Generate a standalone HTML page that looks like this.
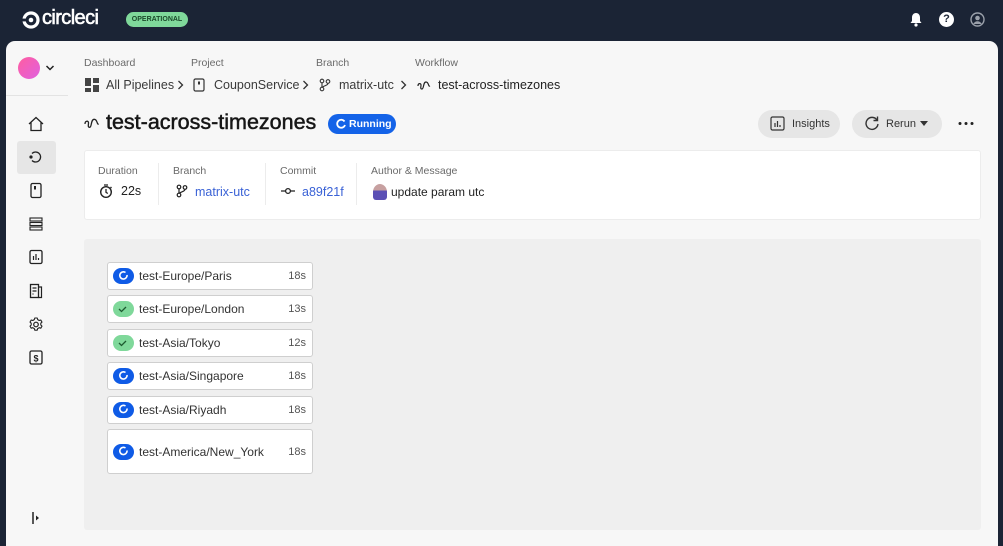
<!DOCTYPE html>
<html><head><style>
*{margin:0;padding:0;box-sizing:border-box}
html,body{width:1003px;height:546px;overflow:hidden}
body{background:#1b2435;font-family:"Liberation Sans",sans-serif;position:relative;color:#161616}
.a{position:absolute}
.lbl{font-size:10.5px;color:#6a6a6a}
.bc{font-size:12.5px;color:#3a3a3a}
.job{position:absolute;left:107px;width:206px;height:28px;background:#fff;border:1px solid #cfcfcf;border-radius:3px}
.job .ic{position:absolute;left:5px;top:50%;margin-top:-8px;width:21px;height:16px;border-radius:8px;background:#0f5be6}
.job .ic.ok{background:#7fd89a}
.job .n{position:absolute;left:31px;top:50%;margin-top:-8px;font-size:12px;line-height:16px;color:#333}
.job .t{position:absolute;right:6px;top:50%;margin-top:-8px;font-size:11px;line-height:16px;color:#555}
.side svg{position:absolute;left:27px}
</style></head><body>
<!-- top bar -->
<svg class="a" style="left:22px;top:11px" width="18" height="18" viewBox="0 0 18 18"><circle cx="9" cy="9" r="7" fill="none" stroke="#fff" stroke-width="3.2"/><circle cx="9" cy="9" r="2.3" fill="#fff"/><rect x="0" y="7.6" width="5" height="2.8" fill="#1b2435"/></svg>
<div class="a" style="left:42px;top:7px;font-size:20px;color:#fff;letter-spacing:-0.6px;-webkit-text-stroke:0.6px #fff">circleci</div>
<div class="a" style="left:126px;top:12px;width:62px;height:15px;border-radius:8px;background:#7fd89a;color:#1b4a2a;font-size:7px;font-weight:bold;text-align:center;line-height:15px">OPERATIONAL</div>
<svg class="a" style="left:909px;top:12px" width="14" height="15" viewBox="0 0 14 15"><path d="M7 1C4.5 1 3 3 3 5.5V9L1.5 11h11L11 9V5.5C11 3 9.5 1 7 1z" fill="#fff"/><circle cx="7" cy="13" r="1.6" fill="#fff"/></svg>
<div class="a" style="left:939px;top:12px;width:15px;height:15px;border-radius:50%;background:#fff;color:#1b2435;font-size:11px;font-weight:bold;text-align:center;line-height:15px">?</div>
<svg class="a" style="left:970px;top:12px" width="15" height="15" viewBox="0 0 15 15"><circle cx="7.5" cy="7.5" r="6.5" fill="none" stroke="#9aa0aa" stroke-width="1.4"/><circle cx="7.5" cy="6" r="2.3" fill="#9aa0aa"/><path d="M3.3 12c1-2 2.5-2.8 4.2-2.8s3.2.8 4.2 2.8" fill="#9aa0aa"/></svg>
<!-- main panel -->
<div class="a" style="left:6px;top:41px;width:992px;height:505px;background:#f7f7f7;border-radius:9px 9px 0 0"></div>
<div class="a" style="left:6px;top:95px;width:62px;height:1px;background:#e3e3e3"></div>
<div class="a" style="left:18px;top:57px;width:22px;height:22px;border-radius:50%;background:linear-gradient(135deg,#ff5ea0,#e060e0)"></div>
<svg class="a" style="left:45px;top:64px" width="10" height="8" viewBox="0 0 10 8"><path d="M1.5 2l3.5 3.5L8.5 2" fill="none" stroke="#222" stroke-width="1.5"/></svg>
<!-- sidebar -->
<div class="a" style="left:17px;top:141px;width:39px;height:33px;background:#e6e6e6;border-radius:3px"></div>
<div class="side">
<svg style="top:116px" width="18" height="16" viewBox="0 0 18 16"><path d="M2 8L9 1.5 16 8M4 6.5V14.5h10V6.5" fill="none" stroke="#222" stroke-width="1.3"/></svg>
<svg style="top:149px" width="18" height="16" viewBox="0 0 18 16"><path d="M5 4.5A5 5 0 1 1 5 11.5" fill="none" stroke="#222" stroke-width="1.3"/><circle cx="4" cy="8" r="1.6" fill="#222"/></svg>
<svg style="top:182px" width="18" height="17" viewBox="0 0 18 17"><rect x="4" y="1.5" width="10" height="14" rx="1.5" fill="none" stroke="#222" stroke-width="1.3"/><rect x="7" y="4" width="2" height="3.5" fill="#222"/></svg>
<svg style="top:216px" width="18" height="16" viewBox="0 0 18 16"><rect x="3" y="2" width="12" height="3" fill="none" stroke="#222" stroke-width="1.1"/><rect x="3" y="6.5" width="12" height="3" fill="none" stroke="#222" stroke-width="1.1"/><rect x="3" y="11" width="12" height="3" fill="none" stroke="#222" stroke-width="1.1"/></svg>
<svg style="top:249px" width="18" height="16" viewBox="0 0 18 16"><rect x="3" y="1.5" width="12" height="13" rx="1.5" fill="none" stroke="#222" stroke-width="1.3"/><path d="M6.5 11V7M9 11V5M11.5 11V9" stroke="#222" stroke-width="1.2"/></svg>
<svg style="top:283px" width="18" height="16" viewBox="0 0 18 16"><rect x="3.5" y="1.5" width="8" height="13" fill="none" stroke="#222" stroke-width="1.3"/><path d="M11.5 4H14.5V14.5H11.5M5.5 5h4M5.5 8h4M5.5 11h1" stroke="#222" stroke-width="1.2" fill="none"/></svg>
<svg style="top:316px" width="18" height="17" viewBox="-9 -8.5 18 17"><circle r="2.3" fill="none" stroke="#222" stroke-width="1.2"/><path d="M-1.2 -6.5h2.4l.5 1.6 1.5.9 1.6-.5 1.2 2.1-1.2 1.1v1.8l1.2 1.1-1.2 2.1-1.6-.5-1.5.9-.5 1.6h-2.4l-.5-1.6-1.5-.9-1.6.5-1.2-2.1 1.2-1.1v-1.8l-1.2-1.1 1.2-2.1 1.6.5 1.5-.9z" fill="none" stroke="#222" stroke-width="1.1" stroke-linejoin="round"/></svg>
<svg style="top:349px" width="18" height="17" viewBox="0 0 18 17"><rect x="3" y="2" width="12" height="13" rx="1.5" fill="none" stroke="#222" stroke-width="1.3"/><text x="9" y="12.5" font-size="9" text-anchor="middle" font-family="Liberation Sans" font-weight="bold" fill="#222">$</text></svg>
<svg style="top:510px" width="18" height="16" viewBox="0 0 18 16"><path d="M6 2v12" stroke="#222" stroke-width="1.5"/><path d="M9 5.5l3 2.5-3 2.5z" fill="#222"/></svg>
</div>
<!-- breadcrumbs -->
<div class="a lbl" style="left:84px;top:57px">Dashboard</div>
<div class="a lbl" style="left:191px;top:57px">Project</div>
<div class="a lbl" style="left:316px;top:57px">Branch</div>
<div class="a lbl" style="left:415px;top:57px">Workflow</div>
<svg class="a" style="left:85px;top:78px" width="14" height="14" viewBox="0 0 14 14" fill="#444"><rect x="0" y="0" width="6" height="8"/><rect x="8" y="0" width="6" height="5"/><rect x="0" y="10" width="6" height="4"/><rect x="8" y="7" width="6" height="7"/></svg>
<div class="a bc" style="left:106px;top:78px">All Pipelines</div>
<svg class="a" style="left:177px;top:80px" width="7" height="10" viewBox="0 0 7 10"><path d="M1.5 1l4 4-4 4" fill="none" stroke="#333" stroke-width="1.3"/></svg>
<svg class="a" style="left:193px;top:78px" width="12" height="14" viewBox="0 0 12 14"><rect x="1" y="1" width="10" height="12" rx="1.5" fill="none" stroke="#333" stroke-width="1.2"/><rect x="5" y="3.5" width="2" height="3" fill="#333"/></svg>
<div class="a bc" style="left:214px;top:78px">CouponService</div>
<svg class="a" style="left:302px;top:80px" width="7" height="10" viewBox="0 0 7 10"><path d="M1.5 1l4 4-4 4" fill="none" stroke="#333" stroke-width="1.3"/></svg>
<svg class="a" style="left:319px;top:78px" width="12" height="14" viewBox="0 0 12 14"><circle cx="3" cy="3" r="1.8" fill="none" stroke="#333" stroke-width="1.1"/><circle cx="3" cy="11" r="1.8" fill="none" stroke="#333" stroke-width="1.1"/><circle cx="9" cy="3.5" r="1.8" fill="none" stroke="#333" stroke-width="1.1"/><path d="M3 5v4M9 5.3c0 2.5-4 2-5.5 4" fill="none" stroke="#333" stroke-width="1.1"/></svg>
<div class="a bc" style="left:339px;top:78px">matrix-utc</div>
<svg class="a" style="left:400px;top:80px" width="7" height="10" viewBox="0 0 7 10"><path d="M1.5 1l4 4-4 4" fill="none" stroke="#333" stroke-width="1.3"/></svg>
<svg class="a" style="left:417px;top:79px" width="14" height="12" viewBox="0 0 14 12"><path d="M1 7c0-3 3-3 3-1s-1 4 1 4 1-7 4-7 2 5 4 4" fill="none" stroke="#222" stroke-width="1.2"/></svg>
<div class="a bc" style="left:438px;top:78px;color:#222">test-across-timezones</div>
<!-- title -->
<svg class="a" style="left:84px;top:116px" width="16" height="14" viewBox="0 0 16 14"><path d="M1 8c0-3.5 3.5-3.5 3.5-1.2s-1 4.5 1.2 4.5 1-8 4.5-8 2.5 6 4.5 4.5" fill="none" stroke="#222" stroke-width="1.3"/></svg>
<div class="a" style="left:106px;top:110px;font-size:21.5px;color:#161616;-webkit-text-stroke:0.5px #161616;white-space:nowrap">test-across-timezones</div>
<div class="a" style="left:328px;top:114px;width:68px;height:20px;border-radius:10px;background:#1463e8;color:#fff;font-size:10.5px;font-weight:bold;line-height:20px;padding-left:21px">Running</div>
<svg class="a" style="left:335px;top:118px" width="12" height="12" viewBox="0 0 12 12"><path d="M9.5 3.5A4 4 0 1 0 10 7" fill="none" stroke="#fff" stroke-width="1.8"/></svg>
<!-- buttons -->
<div class="a" style="left:758px;top:110px;width:82px;height:28px;border-radius:14px;background:#e6e6e6;font-size:11px;color:#333;line-height:28px;padding-left:34px">Insights</div>
<svg class="a" style="left:770px;top:116px" width="15" height="15" viewBox="0 0 15 15"><rect x="1" y="1" width="13" height="13" rx="1.5" fill="none" stroke="#333" stroke-width="1.2"/><path d="M5 11V7M7.5 11V5M10 11V9" stroke="#333" stroke-width="1.2"/></svg>
<div class="a" style="left:852px;top:110px;width:90px;height:28px;border-radius:14px;background:#e6e6e6;font-size:11px;color:#333;line-height:28px;padding-left:34px">Rerun</div>
<svg class="a" style="left:864px;top:115px" width="16" height="16" viewBox="0 0 16 16"><path d="M13 5A6 6 0 1 0 14 9" fill="none" stroke="#333" stroke-width="1.4"/><path d="M13.5 1.5V5.5H9.5" fill="none" stroke="#333" stroke-width="1.4"/></svg>
<svg class="a" style="left:920px;top:121px" width="8" height="5" viewBox="0 0 8 5"><path d="M0 0h8L4 5z" fill="#333"/></svg>
<svg class="a" style="left:958px;top:121px" width="16" height="5" viewBox="0 0 16 5"><circle cx="2" cy="2.5" r="1.5" fill="#222"/><circle cx="8" cy="2.5" r="1.5" fill="#222"/><circle cx="14" cy="2.5" r="1.5" fill="#222"/></svg>
<!-- info card -->
<div class="a" style="left:84px;top:150px;width:897px;height:70px;background:#fff;border:1px solid #ececec;border-radius:3px"></div>
<div class="a" style="left:158px;top:163px;width:1px;height:42px;background:#ececec"></div>
<div class="a" style="left:265px;top:163px;width:1px;height:42px;background:#ececec"></div>
<div class="a" style="left:356px;top:163px;width:1px;height:42px;background:#ececec"></div>
<div class="a lbl" style="left:98px;top:165px">Duration</div>
<div class="a lbl" style="left:173px;top:165px">Branch</div>
<div class="a lbl" style="left:280px;top:165px">Commit</div>
<div class="a lbl" style="left:371px;top:165px">Author &amp; Message</div>
<svg class="a" style="left:99px;top:184px" width="14" height="14" viewBox="0 0 14 14"><circle cx="7" cy="8" r="5.3" fill="none" stroke="#222" stroke-width="1.4"/><path d="M7 5v3.3l1.8 1.2M5 1h4M11.5 3l1 1" stroke="#222" stroke-width="1.3" fill="none"/></svg>
<div class="a" style="left:121px;top:184px;font-size:12.5px;color:#222">22s</div>
<svg class="a" style="left:176px;top:184px" width="12" height="14" viewBox="0 0 12 14"><circle cx="3" cy="3" r="1.8" fill="none" stroke="#222" stroke-width="1.2"/><circle cx="3" cy="11" r="1.8" fill="none" stroke="#222" stroke-width="1.2"/><circle cx="9" cy="3.5" r="1.8" fill="none" stroke="#222" stroke-width="1.2"/><path d="M3 5v4M9 5.3c0 2.5-4 2-5.5 4" fill="none" stroke="#222" stroke-width="1.2"/></svg>
<div class="a" style="left:195px;top:185px;font-size:12.5px;color:#3a62d6">matrix-utc</div>
<svg class="a" style="left:281px;top:187px" width="14" height="8" viewBox="0 0 14 8"><path d="M0 4h4.5M9.5 4H14" stroke="#222" stroke-width="1.3"/><circle cx="7" cy="4" r="2.4" fill="none" stroke="#222" stroke-width="1.3"/></svg>
<div class="a" style="left:302px;top:185px;font-size:12.5px;color:#3a62d6">a89f21f</div>
<div class="a" style="left:373px;top:184px;width:14px;height:16px;border-radius:50% 50% 3px 3px;background:linear-gradient(#c7a0a0 40%,#5b4fb5 40%)"></div>
<div class="a" style="left:391px;top:185px;font-size:12px;color:#222">update param utc</div>
<!-- canvas -->
<div class="a" style="left:84px;top:239px;width:897px;height:291px;background:#efefef;border-radius:3px"></div>
<div class="job" style="top:262px"><div class="ic"></div><div class="n">test-Europe/Paris</div><div class="t">18s</div></div>
<div class="job" style="top:295px"><div class="ic ok"></div><div class="n">test-Europe/London</div><div class="t">13s</div></div>
<div class="job" style="top:329px"><div class="ic ok"></div><div class="n">test-Asia/Tokyo</div><div class="t">12s</div></div>
<div class="job" style="top:362px"><div class="ic"></div><div class="n">test-Asia/Singapore</div><div class="t">18s</div></div>
<div class="job" style="top:396px"><div class="ic"></div><div class="n">test-Asia/Riyadh</div><div class="t">18s</div></div>
<div class="job" style="top:429px;height:45px"><div class="ic"></div><div class="n">test-America/New_York</div><div class="t">18s</div></div>
<svg class="a" style="left:0;top:0;pointer-events:none" width="1003" height="546">
<g fill="none" stroke="#fff" stroke-width="1.6">
<path d="M125.5 272.5A3.6 3.6 0 1 0 127 275"/>
<path d="M125.5 372.5A3.6 3.6 0 1 0 127 375"/>
<path d="M125.5 406A3.6 3.6 0 1 0 127 408.5"/>
<path d="M125.5 448A3.6 3.6 0 1 0 127 450.5"/>
</g>
<g fill="none" stroke="#1d5a30" stroke-width="1.3">
<path d="M119 309l2.5 2.5 4.5-4.5"/>
<path d="M119 343l2.5 2.5 4.5-4.5"/>
</g>
</svg>
</body></html>
